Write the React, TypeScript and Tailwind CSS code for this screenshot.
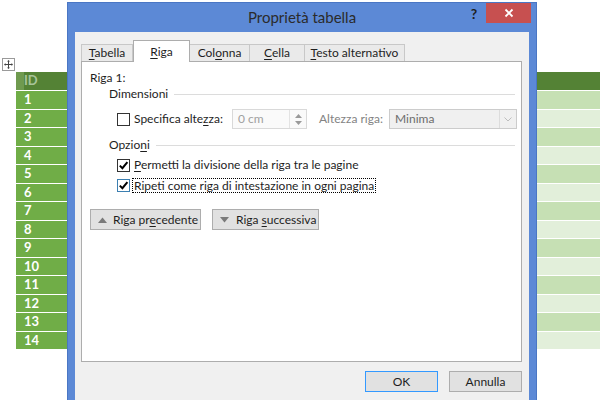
import React from "react";

const ui = { fontFamily: "Lato, 'Noto Sans', sans-serif" };

function U({ children }: { children: React.ReactNode }) {
  return <span className="underline underline-offset-2">{children}</span>;
}

function MoveHandle() {
  return (
    <svg width="13" height="13" viewBox="0 0 13 13" className="block">
      <rect x="0.5" y="0.5" width="12" height="12" fill="#fff" stroke="#9a9a9a" />
      <path d="M6.5 3v7M3 6.5h7" stroke="#444" strokeWidth="1" />
      <path d="M6.5 2l-1.5 1.5h3zM6.5 11l-1.5-1.5h3zM2 6.5l1.5-1.5v3zM11 6.5l-1.5-1.5v3z" fill="#444" />
    </svg>
  );
}

function Check({ checked, focus }: { checked?: boolean; focus?: boolean }) {
  return (
    <span
      className={`w-[13px] h-[13px] border bg-white flex items-center justify-center shrink-0 ${
        focus ? "border-[#3c7fb1]" : "border-[#333]"
      }`}
    >
      {checked && (
        <svg width="11" height="11" viewBox="0 0 11 11">
          <path d="M1.8 5.6l2.6 2.6 5-6" fill="none" stroke="#000" strokeWidth="2" />
        </svg>
      )}
    </span>
  );
}

function Tab({ label, w, active }: { label: React.ReactNode; w: string; active?: boolean }) {
  return active ? (
    <div className={`${w} h-[22px] -mb-px bg-white border border-b-0 border-[#adadad] relative z-10 flex items-center justify-center text-[12px] text-[#1e1e1e]`}>
      {label}
    </div>
  ) : (
    <div className={`${w} h-[17px] bg-[#eaeaea] border border-b-0 border-l-0 first:border-l border-[#c8c8c8] flex items-center justify-center text-[12px] text-[#1e1e1e]`}>
      {label}
    </div>
  );
}

function Group({ label }: { label: React.ReactNode }) {
  return (
    <div className="h-[16px] ml-[27px] mr-[6px] flex items-center gap-[6px]">
      <span>{label}</span>
      <span className="flex-1 h-px bg-[#dcdcdc]" />
    </div>
  );
}

function Triangle({ up }: { up?: boolean }) {
  return (
    <svg width="9" height="6" viewBox="0 0 9 6">
      <path d={up ? "M0 6L4.5 0.5 9 6z" : "M0 0L4.5 5.5 9 0z"} fill="#7a7a7a" />
    </svg>
  );
}

export default function App() {
  const rows = Array.from({ length: 14 }, (_, i) => i + 1);
  return (
    <div className="relative w-[600px] h-[400px] overflow-hidden bg-white" style={ui}>
      {/* table behind the dialog */}
      <div className="pt-[72px] pl-[16px]">
        <div className="flex h-[18px]">
          <div className="w-[8px] bg-[#6f9a4f]" />
          <div className="w-[43px] bg-[#548235] text-[13px] font-bold text-[#a8c49a] flex items-center">ID</div>
          <div className="flex-1 bg-[#548235]" />
        </div>
        {rows.map((n) => (
          <div key={n} className="flex h-[18.5px] border-t border-white">
            <div className="w-[51px] bg-[#70ad47] text-white text-[13px] font-bold pl-[8px] flex items-center">{n}</div>
            <div className={`flex-1 ${n % 2 ? "bg-[#c6e0b4]" : "bg-[#e2efda]"}`} />
          </div>
        ))}
      </div>
      <div className="absolute left-[2px] top-[58px]">
        <MoveHandle />
      </div>

      {/* dialog */}
      <div className="absolute left-[67px] top-[2px] w-[470px] h-[420px] bg-[#5c89d6] border border-[#4a76c4] flex flex-col text-[#1e1e1e]">
        <div className="relative h-[29px] flex items-center justify-center">
          <span className="text-[15px] text-[#2b2b2b] -mt-[1px]">Proprietà tabella</span>
          <div className="absolute right-[5px] top-0 flex">
            <span className="w-[24px] h-[20px] flex items-center justify-center text-[14px] font-bold text-[#1e1e1e]">?</span>
            <span className="w-[45px] h-[20px] bg-[#c75050] flex items-center justify-center">
              <svg width="10" height="10" viewBox="0 0 10 10">
                <path d="M1.5 1.5l7 7M8.5 1.5l-7 7" stroke="#fff" strokeWidth="1.8" />
              </svg>
            </span>
          </div>
        </div>

        <div className="flex-1 mx-[7px] bg-[#f0f0f0] pt-[8px] pl-[6px] pr-[7px] text-[12px] flex flex-col whitespace-nowrap">
          <div className="flex items-end h-[21px]">
            <Tab w="w-[52px]" label={<span><U>T</U>abella</span>} />
            <Tab w="w-[57px]" active label={<span><U>R</U>iga</span>} />
            <Tab w="w-[60px]" label={<span>Col<U>o</U>nna</span>} />
            <Tab w="w-[55px]" label={<span><U>C</U>ella</span>} />
            <Tab w="w-[100px]" label={<span><U>T</U>esto alternativo</span>} />
          </div>

          <div className="h-[301px] bg-white border border-[#adadad] pt-[8px]">
            <div className="h-[16px] ml-[8px] flex items-center">Riga 1:</div>
            <Group label="Dimensioni" />
            <div className="mt-[7px] h-[20px] flex items-center">
              <div className="ml-[35px] w-[115px] flex items-center gap-[4px]">
                <Check />
                <span>Specifica alte<U>z</U>za:</span>
              </div>
              <div className="w-[75px] h-[20px] border border-[#d9d9d9] bg-[#fafafa] flex">
                <span className="flex-1 pl-[5px] text-[#a0a0a0] flex items-center">0 cm</span>
                <span className="w-[17px] border-l border-[#e3e3e3] flex flex-col items-center justify-center gap-[3px]">
                  <svg width="7" height="4" viewBox="0 0 7 4"><path d="M0 4L3.5 0 7 4z" fill="#9a9a9a" /></svg>
                  <svg width="7" height="4" viewBox="0 0 7 4"><path d="M0 0L3.5 4 7 0z" fill="#9a9a9a" /></svg>
                </span>
              </div>
              <span className="ml-[12px] w-[70px] text-[#838383]">Altezza riga:</span>
              <div className="w-[128px] h-[20px] border border-[#cccccc] bg-[#f0f0f0] flex">
                <span className="flex-1 pl-[5px] text-[#6d6d6d] flex items-center">Minima</span>
                <span className="w-[17px] border-l border-[#dcdcdc] flex items-center justify-center">
                  <svg width="8" height="5" viewBox="0 0 8 5"><path d="M0.5 0.5L4 4 7.5 0.5" fill="none" stroke="#bdbdbd" /></svg>
                </span>
              </div>
            </div>
            <div className="mt-[8px]">
              <Group label={<span>Opzio<U>n</U>i</span>} />
            </div>
            <div className="mt-[4px] h-[16px] ml-[35px] flex items-center gap-[4px]">
              <Check checked />
              <span><U>P</U>ermetti la divisione della riga tra le pagine</span>
            </div>
            <div className="mt-[4px] h-[16px] ml-[35px] flex items-center gap-[2px]">
              <Check checked focus />
              <span className="border border-dotted border-black px-px leading-[13px]">R<U>i</U>peti come riga di intestazione in ogni pagina</span>
            </div>
            <div className="mt-[16px] ml-[8px] flex gap-[11px]">
              <div className="w-[111px] h-[21px] bg-[#e1e1e1] border border-[#adadad] flex items-center pl-[7px] gap-[6px]">
                <Triangle up />
                <span>Riga pr<U>e</U>cedente</span>
              </div>
              <div className="w-[107px] h-[21px] bg-[#e1e1e1] border border-[#adadad] flex items-center pl-[7px] gap-[7px]">
                <Triangle />
                <span>Riga <U>s</U>uccessiva</span>
              </div>
            </div>
          </div>

          <div className="mt-[9px] flex justify-end gap-[11px]">
            <div className="w-[73px] h-[21px] bg-[#e1e1e1] border border-[#3399ff] flex items-center justify-center">OK</div>
            <div className="w-[73px] h-[21px] bg-[#e1e1e1] border border-[#adadad] flex items-center justify-center">Annulla</div>
          </div>
        </div>
      </div>
    </div>
  );
}
